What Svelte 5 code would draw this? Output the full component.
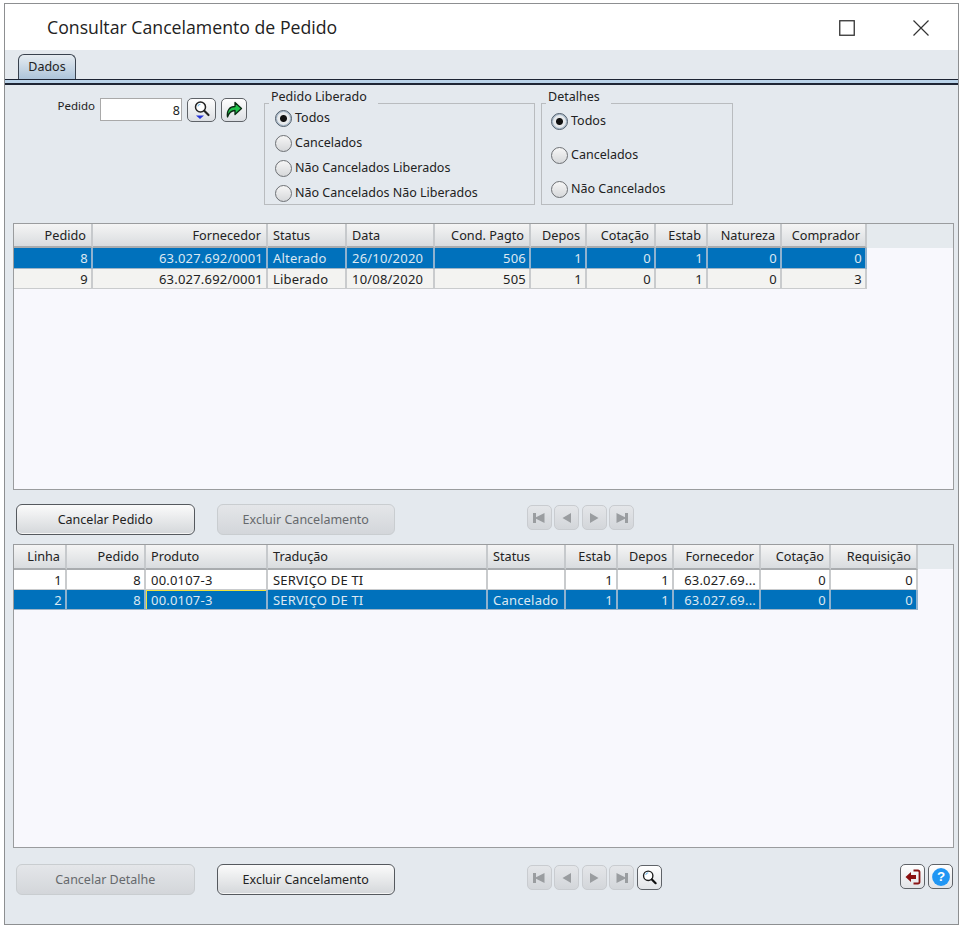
<script>
  const cols1 = [79,175,79,88,96,56,69,52,74,85];
  const head1 = [['Pedido','r'],['Fornecedor','r'],['Status','l'],['Data','l'],['Cond. Pagto','r'],['Depos','r'],['Cotação','r'],['Estab','r'],['Natureza','r'],['Comprador','r']];
  const rows1 = [
    {sel:true, cells:['8','63.027.692/0001','Alterado','26/10/2020','506','1','0','1','0','0']},
    {sel:false, alt:true, cells:['9','63.027.692/0001','Liberado','10/08/2020','505','1','0','1','0','3']}
  ];
  const cols2 = [53,79,122,220,78,52,56,87,70,87];
  const head2 = [['Linha','r'],['Pedido','r'],['Produto','l'],['Tradução','l'],['Status','l'],['Estab','r'],['Depos','r'],['Fornecedor','r'],['Cotação','r'],['Requisição','r']];
  const rows2 = [
    {sel:false, cells:['1','8','00.0107-3','SERVIÇO DE TI','','1','1','63.027.69...','0','0']},
    {sel:true, cells:['2','8','00.0107-3','SERVIÇO DE TI','Cancelado','1','1','63.027.69...','0','0']}
  ];
  const grids = [
    {cols:cols1, head:head1, rows:rows1, cls:'g1', focus:-1},
    {cols:cols2, head:head2, rows:rows2, cls:'g2', focus:2}
  ];
  const nav = ['first','prev','next','last'];
  const radios1 = [['Todos',true],['Cancelados',false],['Não Cancelados Liberados',false],['Não Cancelados Não Liberados',false]];
  const radios2 = [['Todos',true],['Cancelados',false],['Não Cancelados',false]];
</script>

{#snippet grid(g)}
  <div class="grid {g.cls}">
    <table style="width:{g.cols.reduce((a,b)=>a+b,0)}px">
      <colgroup>{#each g.cols as c}<col style="width:{c}px" />{/each}</colgroup>
      <thead><tr>{#each g.head as h}<th class={h[1]}>{h[0]}</th>{/each}</tr></thead>
      <tbody>
        {#each g.rows as r}
          <tr class:sel={r.sel} class:alt={r.alt}>
            {#each r.cells as c, i}
              <td class={g.head[i][1]} class:focus={r.sel && i===g.focus}>{c}</td>
            {/each}
          </tr>
        {/each}
      </tbody>
    </table>
  </div>
{/snippet}

{#snippet navs()}
  {#each nav as n}
    <button class="nav" disabled aria-label={n}>
      <svg viewBox="0 0 16 16" width="16" height="16">
        {#if n==='first'}<path d="M2 3h3v4.2L13.5 3v10L5 8.8V13H2z" fill="#9a9da0"/>
        {:else if n==='prev'}<path d="M12 3v10L3.5 8z" fill="#9a9da0"/>
        {:else if n==='next'}<path d="M4 3v10l8.5-5z" fill="#9a9da0"/>
        {:else}<path d="M14 3h-3v4.2L2.5 3v10L11 8.8V13h3z" fill="#9a9da0"/>{/if}
      </svg>
    </button>
  {/each}
{/snippet}

{#snippet lens(size)}
  <svg viewBox="0 0 20 20" width={size} height={size}>
    <circle cx="8.5" cy="8" r="5.5" fill="#fff" stroke="#1c1c1c" stroke-width="1.6"/>
    <path d="M5.5 7a3.5 3.5 0 0 1 3-2.6" fill="none" stroke="#6fb7e8" stroke-width="1.2"/>
    <path d="M12.8 12.3l4.4 4.4" stroke="#111" stroke-width="2.6" stroke-linecap="round"/>
  </svg>
{/snippet}

<div class="win">
  <header class="title">
    <h1>Consultar Cancelamento de Pedido</h1>
    <div class="controls">
      <svg viewBox="0 0 16 16" width="16" height="16"><rect x="0.75" y="0.75" width="14.5" height="14.5" fill="none" stroke="#333" stroke-width="1.3"/></svg>
      <svg viewBox="0 0 16 16" width="16" height="16"><path d="M0.5 0.5l15 15M15.5 0.5l-15 15" stroke="#333" stroke-width="1.2" fill="none"/></svg>
    </div>
  </header>

  <div class="tabs"><div class="tab">Dados</div></div>
  <div class="tabline"></div>

  <main class="body">
    <section class="form">
      <label class="ped" for="ped">Pedido</label>
      <input id="ped" class="field" value="8" />
      <button class="icon b1" aria-label="Pesquisar">
        <svg viewBox="0 0 20 20" width="20" height="20">
          <circle cx="8.5" cy="7" r="5" fill="#fff" stroke="#222" stroke-width="1.5"/>
          <path d="M5.8 6.4a3 3 0 0 1 2.6-2.2" fill="none" stroke="#6fb7e8" stroke-width="1.1"/>
          <path d="M12.5 11l4 4" stroke="#222" stroke-width="2.2" stroke-linecap="round"/>
          <path d="M4 15.5h8L8 19z" fill="#2433d8"/>
        </svg>
      </button>
      <button class="icon b2" aria-label="Avançar">
        <svg viewBox="0 0 20 20" width="20" height="20">
          <path d="M3.5 17C2.5 10 6 6.5 11 6.5V2.5l6.5 6-6.5 6v-4C7.5 10.5 5 12.5 3.5 17z" fill="#1fc24a" stroke="#0a2a12" stroke-width="1.3" stroke-linejoin="round"/>
        </svg>
      </button>

      <fieldset class="group gl">
        <legend><span>Pedido Liberado</span></legend>
        <div class="radios">
          {#each radios1 as r}
            <div class="radio"><span class="dot" class:on={r[1]}></span>{r[0]}</div>
          {/each}
        </div>
      </fieldset>

      <fieldset class="group gd">
        <legend><span>Detalhes</span></legend>
        <div class="radios">
          {#each radios2 as r}
            <div class="radio"><span class="dot" class:on={r[1]}></span>{r[0]}</div>
          {/each}
        </div>
      </fieldset>
    </section>

    {@render grid(grids[0])}

    <section class="actions a1">
      <button class="btn">Cancelar Pedido</button>
      <button class="btn" disabled>Excluir Cancelamento</button>
      <div class="navs">{@render navs()}</div>
    </section>

    {@render grid(grids[1])}

    <section class="actions a2">
      <button class="btn" disabled>Cancelar Detalhe</button>
      <button class="btn">Excluir Cancelamento</button>
      <div class="navs">
        {@render navs()}
        <button class="nav live" aria-label="Localizar">{@render lens(17)}</button>
      </div>
      <div class="right">
        <button class="nav live" aria-label="Sair">
          <svg viewBox="0 0 18 18" width="18" height="18">
            <path d="M9.5 2.5h4.5a1.5 1.5 0 0 1 1.5 1.5v10a1.5 1.5 0 0 1-1.5 1.5H9.5" fill="none" stroke="#8a1414" stroke-width="1.8"/>
            <path d="M1.5 9l5.5-5v3h5v4H7v3z" fill="#8a0f0f"/>
          </svg>
        </button>
        <button class="nav live" aria-label="Ajuda">
          <svg viewBox="0 0 18 18" width="20" height="20">
            <circle cx="9" cy="9" r="8" fill="#2196f3"/>
            <text x="9" y="13" text-anchor="middle" class="q">?</text>
          </svg>
        </button>
      </div>
    </section>
  </main>
</div>

<style>
  :global(body) { margin: 0; background: #fff; }
  * { box-sizing: border-box; }
  .win {
    width: 955px; height: 922px; margin: 3px 0 0 4px;
    border: 1px solid #8d8f91;
    display: flex; flex-direction: column;
    font-family: "Noto Sans", "Liberation Sans", sans-serif; font-size: 12.5px; color: #222;
    background: #e4e9ee; overflow: hidden;
  }
  .title { height: 46px; background: #fff; display: flex; align-items: center; justify-content: space-between; flex: none; padding: 0 29px 0 42px; }
  h1 { margin: 0; font: 400 17.7px "Open Sans", "Noto Sans", sans-serif; color: #222; }
  .controls { display: flex; gap: 58px; align-items: center; padding-top: 1px; }
  .tabs { height: 29px; flex: none; padding: 4px 0 0 13px; }
  .tab {
    width: 58px; height: 25px; border: 1px solid #39424e; border-bottom: none; border-radius: 6px 6px 0 0;
    background: linear-gradient(#e6ecf1, #adc4da); text-align: center; line-height: 24px; font-size: 12.5px;
  }
  .tabline { height: 6px; flex: none; background: #b9d2e8; border-top: 1px solid #1d2433; border-bottom: 2px solid #1d2433; }
  .body { flex: 1; padding: 0 3px 0 8px; display: flex; flex-direction: column; }

  .form { height: 138px; flex: none; display: flex; align-items: flex-start; }
  .ped { width: 82px; margin-top: 13px; text-align: right; font-size: 11.5px; }
  .field {
    width: 82px; height: 23px; margin: 13px 0 0 5px; border: 1px solid #a9a9a9; background: #fff;
    text-align: right; padding: 2px 1px 0 0; font: 12.5px "Noto Sans", sans-serif; color: #222; border-radius: 0; outline: none;
  }
  .icon {
    height: 24px; margin-top: 13px; padding: 0; border: 1px solid #5f6368; border-radius: 5px;
    background: linear-gradient(#fff, #dcdfe3); display: flex; align-items: center; justify-content: center;
  }
  .b1 { width: 29px; margin-left: 5px; }
  .b2 { width: 26px; margin-left: 5px; }
  .group { border: 1px solid #b9bcbf; margin: 11px 0 0; padding: 0; height: 109px; min-width: 0; }
  .gl { width: 271px; margin-left: 17px; }
  .gd { width: 192px; margin-left: 6px; }
  legend { margin-left: 4px; padding: 0 11px 0 2px; font-size: 12.5px; line-height: 14px; }
  legend span { display: block; transform: translateY(-6px); }
  .radios { display: flex; flex-direction: column; }
  .gl .radios { margin-top: -1px; padding-left: 10px; gap: 7px; }
  .gd .radios { margin-top: 2px; padding-left: 9px; gap: 16px; }
  .radio { display: flex; align-items: center; gap: 3px; height: 18px; line-height: 18px; }
  .dot {
    width: 17px; height: 17px; border-radius: 50%; flex: none; border: 1px solid #6d7074;
    background: linear-gradient(#f6f6f6, #d6d8da);
  }
  .dot.on { background: radial-gradient(circle, #111 0 3px, #e8eaec 4px, #dfe4e8 100%); border-color: #4d5a68; box-shadow: inset 0 0 0 1px #a7b9ca; }

  .grid { width: 941px; flex: none; border: 1px solid #9a9c9e;
    background: linear-gradient(#e5eaee, #e5eaee) top / 100% 24px no-repeat, #f8f8fd; }
  .g1 { height: 267px; }
  .g2 { height: 304px; }
  table { border-collapse: separate; border-spacing: 0; table-layout: fixed; font-size: 12.5px; }
  th {
    height: 24px; padding: 0 5px; font-weight: 400; font-size: 12.7px; overflow: hidden; white-space: nowrap;
    background: linear-gradient(#f5f5f5, #d9dcdf); border-right: 2px solid #c6c9cc; border-bottom: 2px solid #a9acaf;
  }
  td { height: 20px; padding: 2px 3px 0 5px; overflow: hidden; white-space: nowrap; background: #fff; border-right: 2px solid #c9cbcd; border-bottom: 1px solid #c9cbcd; line-height: 17px; font-size: 13px; letter-spacing: .2px; }
  .g1 td { height: 20.5px; }
  .g2 th { height: 25px; padding-bottom: 2px; }
  tr.alt td { background: #f3f3f1; }
  tr.sel td { background: #0071bc; color: #dce8f2; border-right-color: #8fb2cf; border-bottom-color: #9fb4c6; }
  td.focus { box-shadow: inset 1px 1px 0 #f2e23a; }
  .r { text-align: right; }
  .l { text-align: left; }

  .actions { display: flex; align-items: flex-start; flex: none; }
  .a1 { height: 54px; padding-top: 14px; }
  .a2 { height: 54px; padding-top: 16px; }
  .btn {
    width: 178.5px; height: 31px; padding: 0; border: 1px solid #55595e; border-radius: 6px;
    background: linear-gradient(#fbfbfb, #d4d7da); font: 12.5px "Noto Sans", sans-serif; color: #222;
    margin-left: 3px; box-shadow: inset 0 -1px 0 #f5f5f5;
  }
  .btn + .btn { margin-left: 22px; }
  .btn:disabled { border-color: #c9cdd0; background: linear-gradient(#e4e6e9, #d3d6da); color: #66696c; box-shadow: none; }
  .navs { display: flex; gap: 2.6px; margin-left: 131.5px; padding-top: 1px; }
  .nav {
    width: 25px; height: 25px; padding: 0; border: 1px solid #c9ccd0; border-radius: 5px;
    background: linear-gradient(#e4e6e9, #d3d6da); display: flex; align-items: center; justify-content: center;
  }
  .nav.live { border-color: #5f6368; background: linear-gradient(#fff, #e2e4e7); }
  .right { margin-left: auto; display: flex; gap: 2.6px; padding-right: 2px; }
  .q { font: 700 12px "Liberation Sans", sans-serif; fill: #fff; }
</style>
